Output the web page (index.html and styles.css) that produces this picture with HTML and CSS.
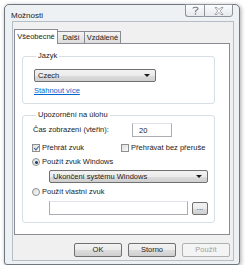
FILE: index.html
```html
<!DOCTYPE html>
<html lang="cs">
<head>
    <meta charset="UTF-8" />
    <title>Možnosti</title>
    <link rel="stylesheet" href="styles.css">
</head>
<body>
    <div class="window">
        <div class="titlebar">
            <span class="title">Možnosti</span>
            <div class="caption-buttons">
                <span class="cap help">
                    <svg width="7" height="9" viewBox="0 0 7 9"><path d="M1 2.5 C1 0.8 6 0.8 6 2.5 C6 4 3.5 4 3.5 5.5 V6.2" fill="none" stroke="#7a7f86" stroke-width="1.2"/><rect x="2.8" y="7.2" width="1.4" height="1.4" fill="#7a7f86"/></svg>
                </span>
                <span class="cap close">
                    <svg width="10" height="8" viewBox="0 0 10 8"><path d="M1 0.5 H3 L5 2.6 L7 0.5 H9 L6.2 4 L9 7.5 H7 L5 5.4 L3 7.5 H1 L3.8 4 Z" fill="#fff" stroke="#8a8f96" stroke-width="0.8"/></svg>
                </span>
            </div>
        </div>

        <div class="client">
            <div class="tabs">
                <span class="tab active">Všeobecné</span>
                <span class="tab">Další</span>
                <span class="tab">Vzdálené</span>
            </div>

            <div class="tab-page">
                <fieldset class="group group-lang">
                    <legend>Jazyk</legend>
                    <div class="combo combo-lang"><span>Czech</span><i class="arrow"></i></div>
                    <a class="link" href="#">Stáhnout více</a>
                </fieldset>

                <fieldset class="group group-notify">
                    <legend>Upozornění na úlohu</legend>
                    <div class="row row-time">
                        <span class="time-label">Čas zobrazení (vteřin):</span>
                        <div class="textbox textbox-time">20</div>
                    </div>
                    <div class="row row-checks">
                        <label class="check-item"><span class="checkbox checked"></span>Přehrát zvuk</label>
                        <label class="check-item check-loop"><span class="checkbox"></span>Přehrávat bez přeruše</label>
                    </div>
                    <div class="row row-radio">
                        <label class="check-item"><span class="radio selected"></span>Použít zvuk Windows</label>
                    </div>
                    <div class="combo combo-sound"><span>Ukončení systému Windows</span><i class="arrow"></i></div>
                    <div class="row row-radio">
                        <label class="check-item"><span class="radio"></span>Použít vlastní zvuk</label>
                    </div>
                    <div class="row row-file">
                        <div class="textbox textbox-file"></div>
                        <span class="button button-browse">...</span>
                    </div>
                </fieldset>
            </div>

            <div class="buttons">
                <span class="button">OK</span>
                <span class="button">Storno</span>
                <span class="button disabled">Použít</span>
            </div>
        </div>
    </div>
</body>
</html>
```

FILE: styles.css
```css
/* Global */
* {
    box-sizing: border-box;
}

body {
    margin: 0;
    background: #ffffff;
    font-family: "Liberation Sans", Arial, sans-serif;
    font-size: 7.5px;
    line-height: 8px;
    color: #1b1b1b;
}

/* Window frame */
.window {
    margin: 4px 0 0 4px;
    width: 236px;
    height: 261px;
    border: 1px solid #6f7780;
    border-radius: 5px 5px 3px 3px;
    background: #eef1f4;
    box-shadow: 1px 1px 4px rgba(0, 0, 0, 0.35);
    padding: 0 5px 3px 7px;
    display: flex;
    flex-direction: column;
}

.titlebar {
    height: 16px;
    display: flex;
    align-items: flex-start;
}

.title {
    margin: 7px 0 0 -1px;
    font-size: 8px;
}

.caption-buttons {
    margin: -1px 1px 0 auto;
    display: flex;
}

.cap {
    height: 13px;
    border: 1px solid #8d939b;
    background: linear-gradient(#fbfcfd, #e6e9ed);
    display: flex;
    align-items: center;
    justify-content: center;
}

.help {
    width: 19px;
    border-right: none;
    border-radius: 0 0 0 3px;
}

.close {
    width: 29px;
    border-radius: 0 0 3px 0;
}

/* Client area */
.client {
    flex: 1;
    border: 1px solid #b6bdc5;
    background: #f0f0f0;
    padding: 7px 0 0 1px;
    display: flex;
    flex-direction: column;
}

/* Tabs */
.tabs {
    height: 14px;
    display: flex;
    align-items: flex-end;
    position: relative;
    z-index: 1;
}

.tab {
    height: 12px;
    padding-top: 2px;
    border: 1px solid #898c95;
    border-bottom: none;
    border-left: none;
    background: linear-gradient(#f4f4f4, #dcdcdc);
    text-align: center;
}

.tab.active {
    width: 44px;
    height: 15px;
    margin-bottom: -1px;
    border-left: 1px solid #898c95;
    background: #ffffff;
    padding-top: 3px;
}

.tab:nth-child(2) {
    width: 27px;
}

.tab:nth-child(3) {
    width: 36px;
}

.tab-page {
    width: 216px;
    height: 192px;
    border: 1px solid #898c95;
    background: #ffffff;
    padding: 0 0 0 7px;
}

/* Group boxes */
.group {
    width: 193px;
    margin: 8px 0 0 0;
    padding: 0 0 8px 10px;
    border: 1px solid #d5dfe5;
    border-radius: 3px;
    min-width: 0;
}

.group legend {
    padding: 0 2px;
    margin-left: 3px;
    line-height: 8px;
}

.group-notify {
    margin-top: 7px;
    padding-bottom: 7px;
    overflow: hidden;
}

/* Combo boxes */
.combo {
    height: 13px;
    border: 1px solid #707070;
    border-radius: 2px;
    background: linear-gradient(#f2f2f2 0%, #ebebeb 50%, #dddddd 51%, #cfcfcf 100%);
    display: flex;
    align-items: center;
    padding: 0 5px 0 3px;
}

.combo span {
    flex: 1;
}

.arrow {
    width: 0;
    height: 0;
    border-left: 3px solid transparent;
    border-right: 3px solid transparent;
    border-top: 3px solid #1b1b1b;
}

.combo-lang {
    width: 122px;
    margin: 9px 0 0 1px;
}

.combo-sound {
    width: 159px;
    margin: 3px 0 0 16px;
}

.link {
    display: block;
    margin: 5px 0 0 1px;
    color: #0066cc;
    width: max-content;
}

/* Rows */
.row {
    display: flex;
    align-items: center;
}

.row-time {
    margin-top: 4px;
}

.time-label {
    width: 99px;
}

.textbox {
    height: 14px;
    border: 1px solid #abadb3;
    border-top-color: #e2e3ea;
    background: #ffffff;
    padding: 3px 0 0 6px;
}

.textbox-time {
    width: 40px;
}

.row-checks {
    height: 10px;
    margin-top: 6px;
}

.row-radio {
    height: 10px;
    margin-top: 4px;
}

.check-item {
    display: flex;
    align-items: center;
    white-space: nowrap;
}

.check-loop {
    margin-left: 38px;
}

.checkbox,
.radio {
    width: 8px;
    height: 8px;
    margin: 0 2px 0 -1px;
    border: 1px solid #8e8f8f;
    background: linear-gradient(135deg, #dcdcdc, #fbfbfb);
    display: inline-block;
    position: relative;
}

.checkbox.checked::after {
    content: "";
    position: absolute;
    left: 2px;
    top: 0px;
    width: 2px;
    height: 4px;
    border: solid #4a5f97;
    border-width: 0 1.3px 1.3px 0;
    transform: rotate(40deg);
}

.radio {
    border-radius: 50%;
}

.radio.selected::after {
    content: "";
    position: absolute;
    left: 1.5px;
    top: 1.5px;
    width: 3px;
    height: 3px;
    border-radius: 50%;
    background: #1f3a63;
}

.row-file {
    margin: 4px 0 0 16px;
    align-items: flex-start;
}

.textbox-file {
    width: 139px;
}

/* Buttons */
.button {
    width: 48px;
    height: 14px;
    border: 1px solid #707070;
    border-radius: 2px;
    background: linear-gradient(#f2f2f2 0%, #ebebeb 50%, #dddddd 51%, #cfcfcf 100%);
    display: flex;
    align-items: center;
    justify-content: center;
}

.button.disabled {
    border-color: #adb2b5;
    background: #f4f4f4;
    color: #a0a0a0;
}

.button-browse {
    width: 16px;
    height: 13px;
    margin: 1px 0 0 4px;
    line-height: 6px;
    align-items: flex-end;
    padding-bottom: 3px;
}

.buttons {
    margin-top: 8px;
    width: 216px;
    display: flex;
    justify-content: flex-end;
    gap: 6px;
}
```
